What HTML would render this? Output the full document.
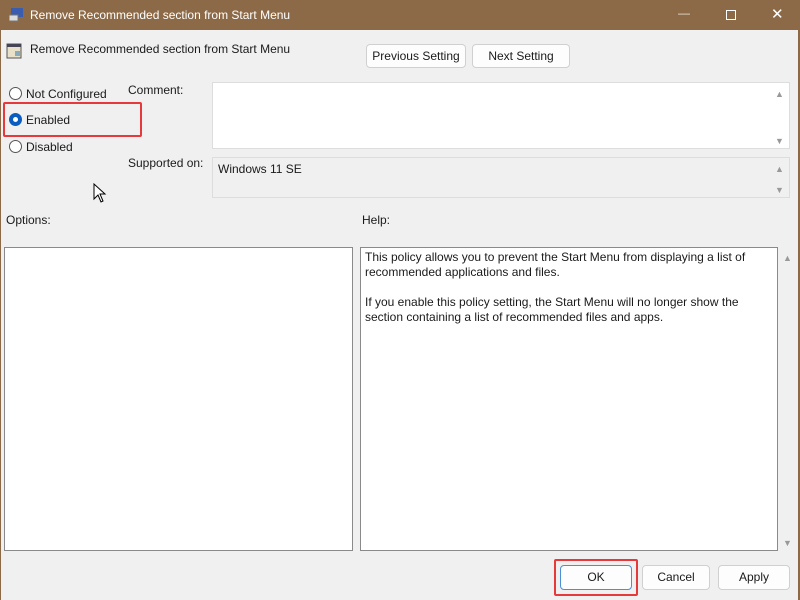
<!DOCTYPE html><html><head><style>
body{margin:0;width:800px;height:600px;background:#f0f0f0;font-family:"Liberation Sans",sans-serif;font-size:12px;color:#1a1a1a;position:relative;overflow:hidden}
.a{position:absolute}
.tb{left:0;top:0;width:800px;height:30px;background:#8d6a47;color:#fff}
.btn{position:absolute;background:#fdfdfd;border:1px solid #d0d0d0;border-radius:4px;text-align:center;box-sizing:border-box;font-size:12px}
.box{position:absolute;background:#fff;border:1px solid #8a8a8a;box-sizing:border-box}
.rad{position:absolute;width:11px;height:11px;border:1px solid #555;border-radius:50%;background:#fff}
.sb{position:absolute;color:#999;font-size:9px}
</style></head><body>
<div class="a tb"><svg class="a" style="left:9px;top:8px" width="16" height="14"><rect x="2" y="0" width="12" height="9" fill="#3a5db0"/><rect x="0" y="7" width="9" height="6" fill="#ddd" stroke="#777"/></svg>
<span class="a" style="left:30px;top:8px;font-size:12px">Remove Recommended section from Start Menu</span>
<span class="a" style="left:678px;top:6px;color:#e8ddd0">—</span>
<div class="a" style="left:726px;top:10px;width:8px;height:8px;border:1px solid #fff"></div>
<span class="a" style="left:771px;top:5px;font-size:15px">✕</span></div>
<div class="a" style="left:0;top:30px;height:570px;border-right:2px solid #8d6a47;border-left:1px solid #8d6a47;box-sizing:border-box;width:800px"></div>
<svg class="a" style="left:6px;top:43px" width="16" height="16"><rect x="1" y="1" width="14" height="14" fill="#e8e0c8" stroke="#555"/><rect x="1" y="1" width="14" height="3" fill="#445"/><rect x="9" y="8" width="5" height="5" fill="#8ab"/></svg>
<span class="a" style="left:30px;top:42px">Remove Recommended section from Start Menu</span>
<div class="btn" style="left:366px;top:44px;width:100px;height:24px;line-height:22px">Previous Setting</div>
<div class="btn" style="left:472px;top:44px;width:98px;height:24px;line-height:22px">Next Setting</div>
<div class="rad" style="left:9px;top:87px"></div><span class="a" style="left:26px;top:87px">Not Configured</span>
<div class="rad" style="left:9px;top:113px;border:4px solid #0a5cc0;width:5px;height:5px"></div><span class="a" style="left:26px;top:113px">Enabled</span>
<div class="rad" style="left:9px;top:140px"></div><span class="a" style="left:26px;top:140px">Disabled</span>
<div class="a" style="left:3px;top:102px;width:135px;height:31px;border:2px solid #e5393b;border-radius:2px"></div>
<span class="a" style="left:128px;top:83px">Comment:</span>
<span class="a" style="left:128px;top:156px">Supported on:</span>
<div class="box" style="left:212px;top:82px;width:578px;height:67px;border-color:#ddd"></div>
<span class="sb" style="left:775px;top:89px">▲</span><span class="sb" style="left:775px;top:136px">▼</span>
<div class="a" style="left:212px;top:157px;width:578px;height:41px;background:#f0f0f0;border:1px solid #ddd;box-sizing:border-box"></div>
<span class="a" style="left:218px;top:162px">Windows 11 SE</span>
<span class="sb" style="left:775px;top:164px">▲</span><span class="sb" style="left:775px;top:185px">▼</span>
<span class="a" style="left:6px;top:213px">Options:</span>
<span class="a" style="left:362px;top:213px">Help:</span>
<div class="box" style="left:4px;top:247px;width:349px;height:304px"></div>
<div class="box" style="left:360px;top:247px;width:418px;height:304px"></div>
<div class="a" style="left:365px;top:250px;width:400px;line-height:15px">This policy allows you to prevent the Start Menu from displaying a list of recommended applications and files.<br><br>If you enable this policy setting, the Start Menu will no longer show the section containing a list of recommended files and apps.</div>
<span class="sb" style="left:783px;top:253px">▲</span><span class="sb" style="left:783px;top:538px">▼</span>
<div class="btn" style="left:560px;top:565px;width:72px;height:25px;line-height:23px;border-color:#4a8fd8">OK</div>
<div class="a" style="left:554px;top:559px;width:80px;height:33px;border:2px solid #e5393b;border-radius:2px"></div>
<div class="btn" style="left:642px;top:565px;width:68px;height:25px;line-height:23px">Cancel</div>
<div class="btn" style="left:718px;top:565px;width:72px;height:25px;line-height:23px">Apply</div>
<svg class="a" style="left:93px;top:183px" width="14" height="20"><path d="M1 1 L1 16 L5 12 L8 19 L10 18 L7 11 L12 11 Z" fill="#fff" stroke="#000"/></svg>
</body></html>
